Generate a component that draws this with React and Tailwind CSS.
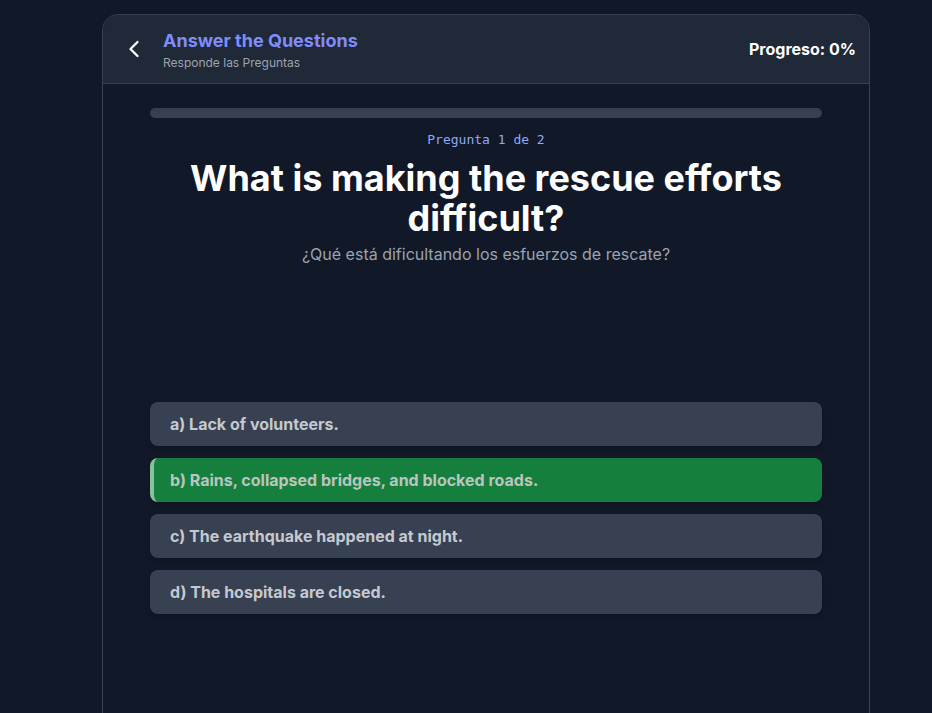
import { ChevronLeft } from "lucide-react";

// opciones de la pregunta
const opciones = [
  { id: "a", texto: "a) Lack of volunteers." },
  { id: "b", texto: "b) Rains, collapsed bridges, and blocked roads." },
  { id: "c", texto: "c) The earthquake happened at night." },
  { id: "d", texto: "d) The hospitals are closed." },
];

const App = () => {
  const seleccion = "b";

  return (
    <div className="min-h-screen bg-[#111827] pl-10 pt-[14px] font-['Inter',sans-serif] overflow-hidden">
      <div className="mx-auto w-[768px] h-[760px] rounded-2xl border border-[#374151] overflow-hidden">
        {/* header */}
        <div className="flex items-center justify-between bg-[#1f2937] border-b border-[#374151] py-3 pl-[17px] pr-[13px]">
          <div className="flex items-center gap-[15px]">
            <button className="text-white">
              <ChevronLeft size={28} strokeWidth={2} />
            </button>
            <div>
              <h1 className="text-lg font-bold text-[#818cf8] leading-7">Answer the Questions</h1>
              <p className="text-xs text-[#9ca3af] leading-4">Responde las Preguntas</p>
            </div>
          </div>
          <div className="text-base font-bold text-white">Progreso: 0%</div>
        </div>

        {/* contenido */}
        <div className="mx-auto w-[672px] pt-6">
          <div className="h-2.5 w-full rounded-full bg-[#374151] shadow-inner"></div>

          <p className="mt-[14px] text-center text-[13px] leading-4 text-[#8eaaf8] font-['DejaVu_Sans_Mono',monospace]">
            Pregunta 1 de 2
          </p>

          <h2 className="mt-[10px] text-center text-4xl font-bold text-white leading-10">
            What is making the rescue efforts difficult?
          </h2>
          <p className="mt-1 text-center text-base text-[#9ca3af]">
            ¿Qué está dificultando los esfuerzos de rescate?
          </p>

          <div className="mt-[136px] flex flex-col gap-3">
            {opciones.map((op) =>
              op.id === seleccion ? (
                <button
                  key={op.id}
                  className="w-full text-left rounded-lg bg-[#15803d] border-l-4 border-white/50 pl-4 pr-5 py-2.5 text-base font-bold text-[#bcc4bf] shadow-md"
                >
                  {op.texto}
                </button>
              ) : (
                <button
                  key={op.id}
                  className="w-full text-left rounded-lg bg-[#374151] px-5 py-2.5 text-base font-bold text-[#c5c9cf] shadow-md"
                >
                  {op.texto}
                </button>
              )
            )}
          </div>
        </div>
      </div>
    </div>
  );
};

export default App;
